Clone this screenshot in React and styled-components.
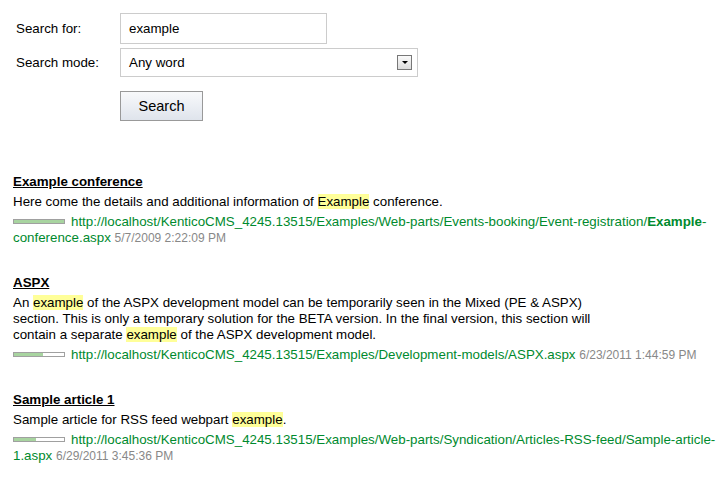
import React from 'react'
import styled, { createGlobalStyle } from 'styled-components'

const Global = createGlobalStyle`
    body {
        margin: 0;
        background: #fff;
        font-family: Arial, "Liberation Sans", sans-serif;
        font-size: 13.33px;
        color: #000;
    }
`

const Page = styled.div`
    padding: 13px 0 0 13px;
`

const Form = styled.div`
    display: grid;
    grid-template-columns: 104px auto;
    row-gap: 4px;
    padding-left: 3px;
    align-items: center;
    justify-items: start;
`

const Label = styled.label`
    font-size: 13.33px;
`

const TextInput = styled.div`
    width: 207px;
    height: 31px;
    box-sizing: border-box;
    border: 1px solid #ccc;
    padding: 0 8px;
    display: flex;
    align-items: center;
`

const Select = styled.div`
    width: 298px;
    height: 29px;
    box-sizing: border-box;
    border: 1px solid #ccc;
    padding: 0 5px 0 8px;
    display: flex;
    align-items: center;
    justify-content: space-between;
`

const Arrow = styled.span`
    width: 15px;
    height: 15px;
    box-sizing: border-box;
    border: 1px solid #777;
    background: linear-gradient(#fafafa, #dcdcdc);
    display: flex;
    align-items: center;
    justify-content: center;
    &::after {
        content: '';
        border-left: 3px solid transparent;
        border-right: 3px solid transparent;
        border-top: 3px solid #000;
    }
`

const Button = styled.button`
    grid-column: 2;
    margin-top: 10px;
    width: 83px;
    height: 30px;
    border: 1px solid #999;
    background: linear-gradient(#f8f9fb, #dfe4ec);
    font-family: Arial, "Liberation Sans", sans-serif;
    font-size: 14.5px;
    padding: 0;
    color: #000;
`

const Results = styled.div`
    margin-top: 53px;
    display: flex;
    flex-direction: column;
    gap: 29px;
`

const Result = styled.div`
    line-height: 16px;
`

const Title = styled.a`
    display: block;
    font-weight: bold;
    text-decoration: underline;
    color: #000;
    margin-bottom: 4px;
`

const Desc = styled.div`
    max-width: 600px;
    margin-bottom: 4px;
`

const Mark = styled.span`
    background: #ffff99;
`

const UrlLine = styled.div`
    width: 708px;
    color: #008a2e;
`

const Bar = styled.span`
    display: inline-block;
    width: 52px;
    height: 5px;
    box-sizing: border-box;
    border: 1px solid #a0a0a0;
    margin-right: 6px;
    vertical-align: 2px;
    background: linear-gradient(to right, #a8d4a0 ${p => p.$score}%, #fff ${p => p.$score}%);
`

const Date = styled.span`
    color: #888;
    font-size: 12px;
`

function App() {
    return (
        <Page>
            <Global />
            <Form>
                <Label>Search for:</Label>
                <TextInput>example</TextInput>
                <Label>Search mode:</Label>
                <Select>Any word<Arrow /></Select>
                <Button>Search</Button>
            </Form>
            <Results>
                <Result>
                    <Title>Example conference</Title>
                    <Desc>Here come the details and additional information of <Mark>Example</Mark> conference.</Desc>
                    <UrlLine>
                        <Bar $score={100} />
                        http://localhost/KenticoCMS_4245.13515/Examples/Web-parts/Events-booking/Event-registration/<b>Example</b>-conference.aspx <Date>5/7/2009 2:22:09 PM</Date>
                    </UrlLine>
                </Result>
                <Result>
                    <Title>ASPX</Title>
                    <Desc>An <Mark>example</Mark> of the ASPX development model can be temporarily seen in the Mixed (PE &amp; ASPX) section. This is only a temporary solution for the BETA version. In the final version, this section will contain a separate <Mark>example</Mark> of the ASPX development model.</Desc>
                    <UrlLine>
                        <Bar $score={58} />
                        http://localhost/KenticoCMS_4245.13515/Examples/Development-models/ASPX.aspx <Date>6/23/2011 1:44:59 PM</Date>
                    </UrlLine>
                </Result>
                <Result>
                    <Title>Sample article 1</Title>
                    <Desc>Sample article for RSS feed webpart <Mark>example</Mark>.</Desc>
                    <UrlLine>
                        <Bar $score={45} />
                        http://localhost/KenticoCMS_4245.13515/Examples/Web-parts/Syndication/Articles-RSS-feed/Sample-article-1.aspx <Date>6/29/2011 3:45:36 PM</Date>
                    </UrlLine>
                </Result>
            </Results>
        </Page>
    )
}

export default App
